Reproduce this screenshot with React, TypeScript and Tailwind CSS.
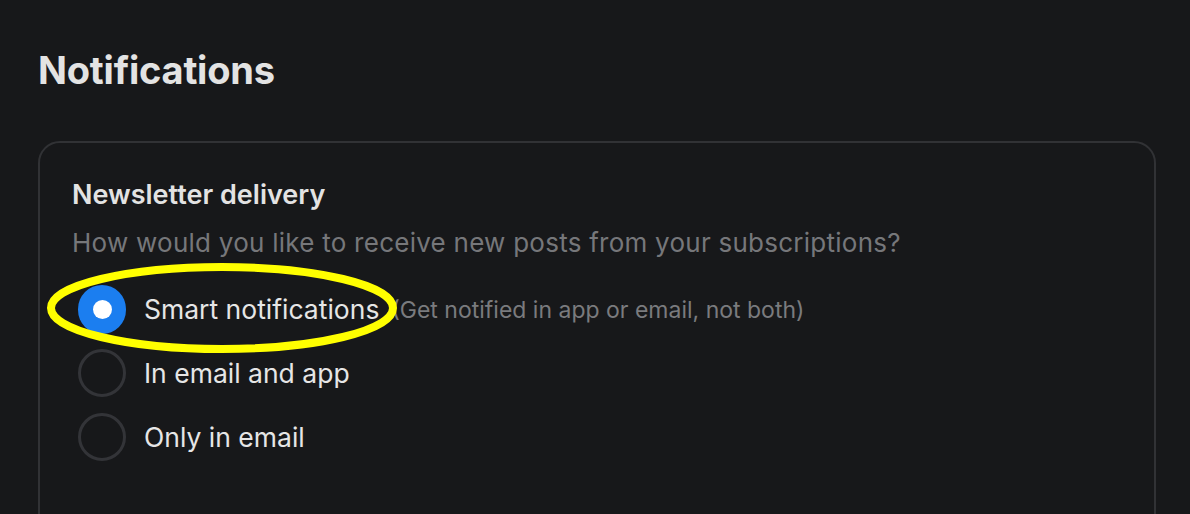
import React from 'react';

const options = [
  { label: 'Smart notifications', hint: '(Get notified in app or email, not both)', selected: true },
  { label: 'In email and app', hint: '', selected: false },
  { label: 'Only in email', hint: '', selected: false },
];

export default function App() {
  return (
    <div
      className="relative h-[514px] w-[1190px] overflow-hidden bg-[#17181a] pl-[38px] pr-[34px] pt-[48px]"
      style={{ fontFamily: 'Inter, "Noto Sans", sans-serif' }}
    >
      <h1 className="text-[38px] font-bold leading-[44px] tracking-[-0.2px] text-[#e3e3e3]">Notifications</h1>

      <div className="mt-[49px] h-[500px] rounded-[22px] border-2 border-[#313235] px-[32px] pt-[36px]">
        <h2 className="text-[27px] font-semibold leading-[32px] text-[#e3e3e3]">Newsletter delivery</h2>
        <p className="mt-[16px] text-[26px] leading-[32px] tracking-[0.25px] text-[#76777a]">
          How would you like to receive new posts from your subscriptions?
        </p>

        <div className="mt-[26px] flex flex-col gap-[16px]">
          {options.map((o) => (
            <div key={o.label} className="flex items-center">
              <div className="ml-[6px] flex h-[48px] w-[48px] shrink-0 items-center justify-center">
                {o.selected ? (
                  <div className="flex h-[49px] w-[49px] items-center justify-center rounded-full bg-[#1b7ef0]">
                    <div className="h-[19px] w-[19px] rounded-full bg-white" />
                  </div>
                ) : (
                  <div className="h-[48px] w-[48px] rounded-full border-[3px] border-[#333438]" />
                )}
              </div>
              <span className="ml-[18px] text-[26.5px] leading-[32px] text-[#e6e6e6]">{o.label}</span>
              {o.hint && (
                <span className="ml-[12px] pt-[2px] text-[23px] leading-[32px] text-[#7a7b7e]">{o.hint}</span>
              )}
            </div>
          ))}
        </div>
      </div>

      <svg className="pointer-events-none absolute left-0 top-0" width="1190" height="514">
        <ellipse cx="222" cy="308" rx="171" ry="41" fill="none" stroke="#ffff00" strokeWidth="8" />
      </svg>
    </div>
  );
}
